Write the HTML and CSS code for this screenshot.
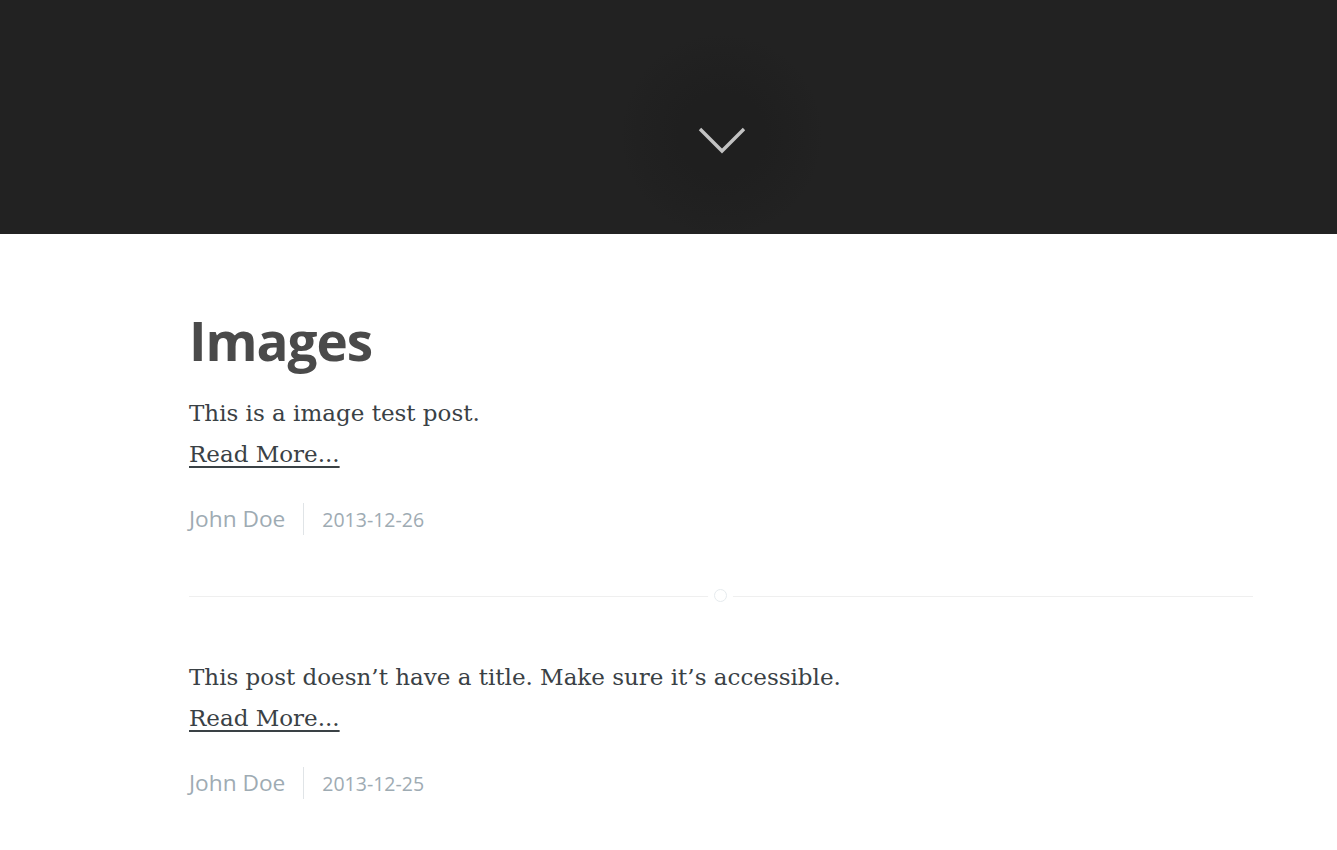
FILE: index.html
```html
<!DOCTYPE html>
<html lang="en">
<head>
<meta charset="utf-8">
<title>Blog</title>
<link rel="stylesheet" href="styles.css">
</head>
<body>
<header class="site-head">
  <a class="scroll-down" href="#content" aria-label="Scroll down">
    <svg class="scroll-icon" width="50" height="30" viewBox="0 0 50 30">
      <polyline points="3,4 25,26 47,4" fill="none" stroke="#c2c2c2" stroke-width="3.4"/>
    </svg>
  </a>
</header>
<main id="content" class="content">
  <article class="post">
    <h2 class="post-title">Images</h2>
    <section class="post-excerpt">
      <p>This is a image test post.<br><a class="read-more" href="#">Read More...</a></p>
    </section>
    <footer class="post-meta">
      <span class="author">John Doe</span>
      <time class="post-date">2013-12-26</time>
    </footer>
  </article>
  <div class="divider"><span class="divider-dot"></span></div>
  <article class="post">
    <section class="post-excerpt">
      <p>This post doesn’t have a title. Make sure it’s accessible.<br><a class="read-more" href="#">Read More...</a></p>
    </section>
    <footer class="post-meta">
      <span class="author">John Doe</span>
      <time class="post-date">2013-12-25</time>
    </footer>
  </article>
</main>
</body>
</html>
```

FILE: styles.css
```css
html, body {
  margin: 0;
  padding: 0;
  background: #fff;
}

body {
  font-family: "DejaVu Serif", "Liberation Serif", serif;
  color: #3a4145;
}

.site-head {
  height: 234px;
  background: #222;
  display: flex;
  justify-content: center;
  padding-left: 107px;
  box-sizing: border-box;
  overflow: hidden;
}

.scroll-down {
  margin-top: 35px;
  width: 200px;
  height: 200px;
  flex-shrink: 0;
  border-radius: 50%;
  display: flex;
  align-items: center;
  justify-content: center;
  background: radial-gradient(circle, #1f1f1f 0, #1f1f1f 30%, #202020 45%, #212121 60%, #222 72%);
  align-self: flex-start;
}

.scroll-icon {
  display: block;
  margin-top: 10px;
}

.content {
  width: 1064px;
  margin-left: 189px;
  padding-top: 72px;
}

.post-title {
  margin: 0 0 17px;
  font-family: "Open Sans", sans-serif;
  font-weight: 700;
  font-size: 53px;
  line-height: 70px;
  letter-spacing: -1px;
  color: #4a4a4a;
}

.post-excerpt p {
  margin: 0;
  font-size: 23px;
  line-height: 41px;
}

.read-more {
  color: #3a4145;
  text-decoration: underline;
  text-underline-offset: 4px;
}

.post-meta {
  display: flex;
  align-items: center;
  margin-top: 28px;
  font-family: "Open Sans", sans-serif;
  color: #9eabb3;
}

.author {
  font-size: 22.7px;
  padding-right: 18px;
  border-right: 1px solid #e0e4e7;
  line-height: 32px;
}

.post-date {
  font-size: 19.5px;
  padding-left: 18px;
}

.divider {
  position: relative;
  height: 1px;
  background: #efefef;
  margin: 61px 0 60px;
}

.divider-dot {
  position: absolute;
  left: 525px;
  top: -7px;
  width: 11px;
  height: 11px;
  border: 1px solid #e6ebee;
  border-radius: 50%;
  background: #fff;
  box-shadow: 0 0 0 6px #fff;
}
```
